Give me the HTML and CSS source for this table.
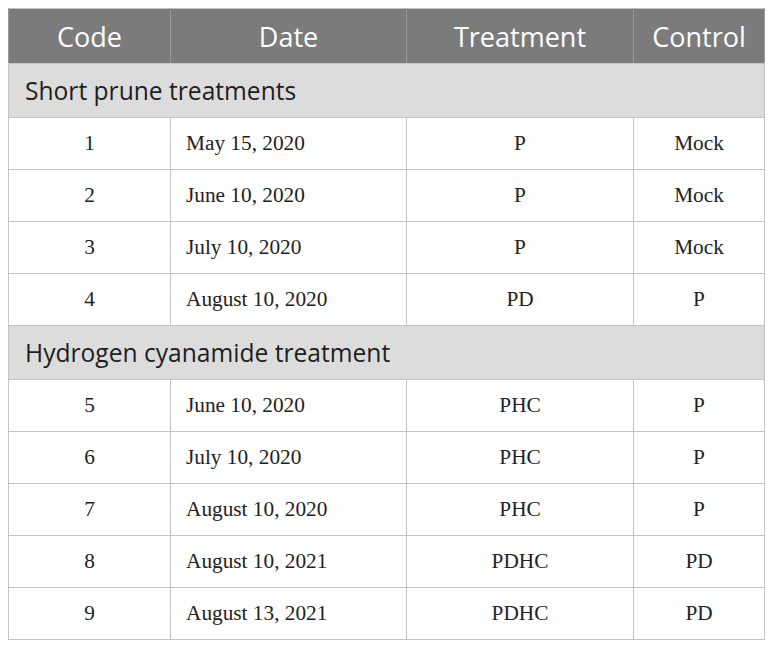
FILE: index.html
```html
<!DOCTYPE html>
<html>
<head>
<meta charset="utf-8">
<link rel="stylesheet" href="styles.css">
</head>
<body>
<table class="tbl">
  <colgroup>
    <col class="c1"><col class="c2"><col class="c3"><col class="c4">
  </colgroup>
  <thead>
    <tr class="head">
      <th>Code</th><th>Date</th><th>Treatment</th><th>Control</th>
    </tr>
  </thead>
  <tbody>
    <tr class="section"><td colspan="4">Short prune treatments</td></tr>
    <tr><td class="ctr">1</td><td class="date">May 15, 2020</td><td class="ctr">P</td><td class="ctr">Mock</td></tr>
    <tr><td class="ctr">2</td><td class="date">June 10, 2020</td><td class="ctr">P</td><td class="ctr">Mock</td></tr>
    <tr><td class="ctr">3</td><td class="date">July 10, 2020</td><td class="ctr">P</td><td class="ctr">Mock</td></tr>
    <tr><td class="ctr">4</td><td class="date">August 10, 2020</td><td class="ctr">PD</td><td class="ctr">P</td></tr>
    <tr class="section"><td colspan="4">Hydrogen cyanamide treatment</td></tr>
    <tr><td class="ctr">5</td><td class="date">June 10, 2020</td><td class="ctr">PHC</td><td class="ctr">P</td></tr>
    <tr><td class="ctr">6</td><td class="date">July 10, 2020</td><td class="ctr">PHC</td><td class="ctr">P</td></tr>
    <tr><td class="ctr">7</td><td class="date">August 10, 2020</td><td class="ctr">PHC</td><td class="ctr">P</td></tr>
    <tr><td class="ctr">8</td><td class="date">August 10, 2021</td><td class="ctr">PDHC</td><td class="ctr">PD</td></tr>
    <tr><td class="ctr">9</td><td class="date">August 13, 2021</td><td class="ctr">PDHC</td><td class="ctr">PD</td></tr>
  </tbody>
</table>
</body>
</html>
```
FILE: styles.css
```css
html, body {
  margin: 0;
  padding: 0;
  background: #ffffff;
}
body {
  padding: 8px;
}
.tbl {
  border-collapse: collapse;
  table-layout: fixed;
  width: 756px;
  border: 1px solid #c4c4c4;
}
.c1 { width: 162px; }
.c2 { width: 236px; }
.c3 { width: 227px; }
.c4 { width: 131px; }

.head th {
  background: #7b7b7b;
  color: #ffffff;
  font-family: "Open Sans", "Noto Sans", sans-serif;
  font-weight: 400;
  font-size: 27px;
  height: 54px;
  padding: 0;
  text-align: center;
  border-left: 1px solid #9a9a9a;
  border-right: 1px solid #9a9a9a;
  border-bottom: 1px solid #c4c4c4;
}
.section td {
  background: #dcdcdc;
  color: #1e1e1e;
  font-family: "Open Sans", "Noto Sans", sans-serif;
  font-size: 24.6px;
  height: 53px;
  padding: 0 0 0 16px;
  border: 1px solid #c4c4c4;
}
tbody td {
  font-family: "Liberation Serif", "Times New Roman", serif;
  font-size: 21.3px;
  color: #222222;
  height: 51px;
  padding: 0;
  border: 1px solid #c4c4c4;
}
.ctr { text-align: center; }
.date { text-align: left; padding-left: 15px; }
```
